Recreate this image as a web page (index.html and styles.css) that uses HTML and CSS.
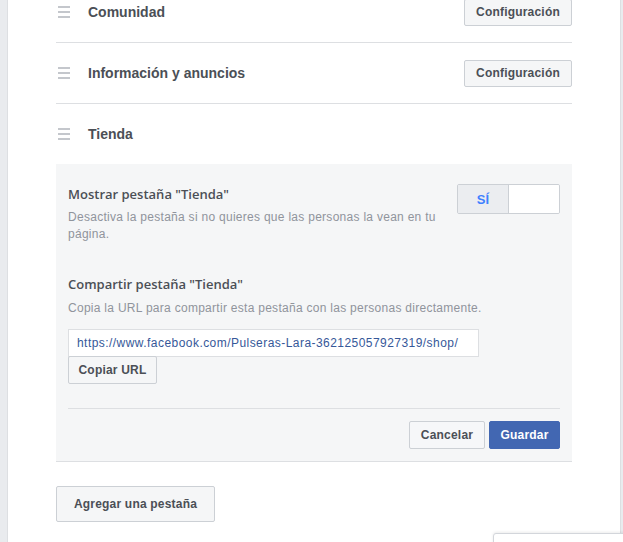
FILE: index.html
```html
<!DOCTYPE html>
<html lang="es">
<head>
<meta charset="utf-8">
<title>Pestañas</title>
<link rel="stylesheet" href="styles.css">
</head>
<body>
<div class="page">
  <div class="list">
    <div class="row">
      <span class="grip"><i></i><i></i><i></i></span>
      <span class="row-title">Comunidad</span>
      <button class="btn btn-config">Configuración</button>
    </div>
    <div class="row">
      <span class="grip"><i></i><i></i><i></i></span>
      <span class="row-title">Información y anuncios</span>
      <button class="btn btn-config">Configuración</button>
    </div>
    <div class="row row-open">
      <span class="grip"><i></i><i></i><i></i></span>
      <span class="row-title">Tienda</span>
    </div>
    <div class="panel">
      <div class="setting">
        <div class="setting-text">
          <div class="setting-title">Mostrar pestaña "Tienda"</div>
          <div class="setting-desc">Desactiva la pestaña si no quieres que las personas la vean en tu página.</div>
        </div>
        <div class="toggle">
          <span class="toggle-on">SÍ</span>
          <span class="toggle-off"></span>
        </div>
      </div>
      <div class="share">
        <div class="setting-title">Compartir pestaña "Tienda"</div>
        <div class="setting-desc">Copia la URL para compartir esta pestaña con las personas directamente.</div>
        <div class="url-box">https://www.facebook.com/Pulseras-Lara-362125057927319/shop/</div>
        <button class="btn btn-copy">Copiar URL</button>
      </div>
      <div class="panel-footer">
        <button class="btn btn-cancel">Cancelar</button>
        <button class="btn btn-primary">Guardar</button>
      </div>
    </div>
  </div>
  <button class="btn btn-add">Agregar una pestaña</button>
</div>
<div class="chat-tab"></div>
</body>
</html>
```

FILE: styles.css
```css
* { box-sizing: border-box; }

html, body {
  margin: 0;
  height: 100%;
}

body {
  background: #e9ebee;
  font-family: "Liberation Sans", Arial, Helvetica, sans-serif;
  color: #1d2129;
  overflow: hidden;
}

.page {
  display: flow-root;
  margin-left: 7px;
  width: 614px;
  min-height: 100%;
  background: #fff;
  border-left: 1px solid #dddfe2;
  border-right: 1px solid #dddfe2;
  padding-left: 48px;
}

.list {
  width: 516px;
  margin-top: -18px;
}

.row {
  display: flex;
  align-items: center;
  height: 61px;
  border-bottom: 1px solid #dddfe2;
}

.row-open {
  height: 60px;
  border-bottom: none;
}

.grip {
  display: flex;
  flex-direction: column;
  gap: 3px;
  width: 12px;
  margin-left: 2px;
  margin-right: 18px;
}

.grip i {
  display: block;
  height: 2px;
  background: #c4c7cc;
}

.row-title {
  flex: 1;
  font-size: 14px;
  font-weight: bold;
  color: #4b4f56;
}

.btn {
  font-family: "Liberation Sans", Arial, Helvetica, sans-serif;
  font-size: 12px;
  font-weight: bold;
  color: #4b4f56;
  background: #f5f6f7;
  border: 1px solid #ccd0d5;
  border-radius: 2px;
  padding: 0 12px;
  height: 27px;
  letter-spacing: 0.2px;
  cursor: pointer;
}

.btn-config {
  width: 108px;
  padding: 0;
}

.panel {
  background: #f5f6f7;
  border-bottom: 1px solid #dddfe2;
  padding: 20px 12px 12px;
}

.setting {
  display: flex;
  align-items: flex-start;
  gap: 12px;
}

.setting-text {
  flex: 1;
  padding-top: 1px;
}

.setting-title {
  font-family: "Open Sans", "Liberation Sans", Arial, sans-serif;
  font-size: 13px;
  font-weight: 600;
  line-height: 18px;
  color: #4b4f56;
}

.setting-desc {
  font-size: 12px;
  line-height: 17px;
  letter-spacing: 0.28px;
  color: #90949c;
  margin-top: 6px;
}

.toggle {
  display: flex;
  width: 103px;
  height: 30px;
  border: 1px solid #ccd0d5;
  border-radius: 2px;
  overflow: hidden;
}

.toggle-on {
  width: 51px;
  display: flex;
  align-items: center;
  justify-content: center;
  background: #ebedf0;
  border-right: 1px solid #ccd0d5;
  color: #4080ff;
  font-size: 13px;
  font-weight: bold;
}

.toggle-off {
  flex: 1;
  background: #fff;
}

.share {
  margin-top: 32px;
}

.share .setting-desc {
  margin-top: 7px;
}

.url-box {
  margin-top: 12px;
  width: 411px;
  height: 28px;
  background: #fff;
  border: 1px solid #dddfe2;
  padding: 0 8px;
  font-size: 12px;
  line-height: 26px;
  letter-spacing: 0.45px;
  color: #365899;
  white-space: nowrap;
  overflow: hidden;
}

.btn-copy {
  display: block;
  margin-top: -1px;
  height: 28px;
  width: 89px;
  padding: 0;
}

.panel-footer {
  margin-top: 24px;
  border-top: 1px solid #dddfe2;
  padding-top: 12px;
  display: flex;
  justify-content: flex-end;
  gap: 4px;
}

.btn-cancel {
  width: 76px;
  height: 28px;
  padding: 0;
  background: #f6f7f9;
}

.btn-primary {
  width: 71px;
  height: 28px;
  padding: 0;
  background: #4267b2;
  border-color: #4267b2;
  color: #fff;
}

.btn-add {
  display: block;
  margin-top: 24px;
  width: 159px;
  height: 36px;
  padding: 0;
}

.chat-tab {
  position: fixed;
  left: 493px;
  top: 533px;
  width: 140px;
  height: 20px;
  background: #fff;
  border: 1px solid #d3d6db;
  border-radius: 3px 0 0 0;
  box-shadow: 0 -1px 3px rgba(0, 0, 0, 0.08);
}
```
